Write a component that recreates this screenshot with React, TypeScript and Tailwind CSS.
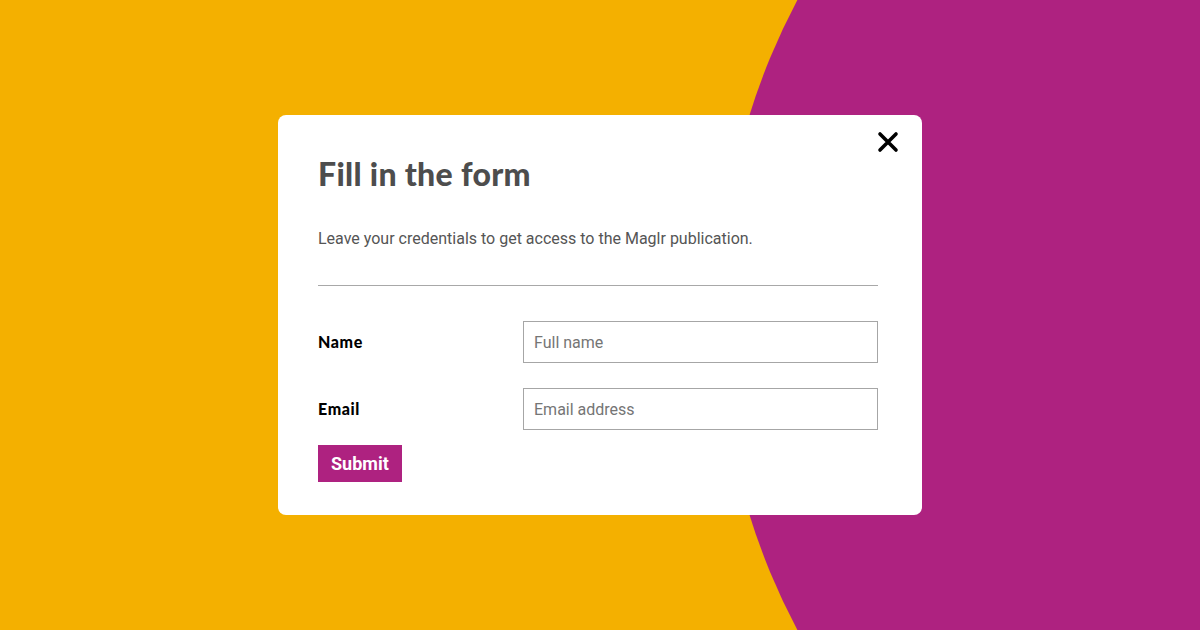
import React from 'react';

const CloseIcon: React.FC = () => (
  <svg width="22" height="22" viewBox="0 0 22 22" fill="none">
    <path d="M3 3L19 19M19 3L3 19" stroke="#000" strokeWidth="3.6" strokeLinecap="round" />
  </svg>
);

const FormRow: React.FC<{ label: string; placeholder: string; type?: string }> = ({ label, placeholder, type = 'text' }) => (
  <div className="grid grid-cols-[205px_1fr] items-center">
    <label className="font-['Lato',sans-serif] font-black text-[16px] tracking-[0.6px] text-black">{label}</label>
    <input
      type={type}
      placeholder={placeholder}
      className="h-[42px] w-full border border-[#a6a6a6] bg-white pl-[10px] font-['Roboto',sans-serif] text-[16px] text-[#333] placeholder:text-[#757575] outline-none"
    />
  </div>
);

export default function App() {
  return (
    <div className="relative flex h-[630px] w-[1200px] items-center justify-center overflow-hidden bg-[#f4b000]">
      {/* background shape */}
      <div className="absolute left-[719px] top-[-357px] h-[1344px] w-[1344px] rounded-full bg-[#ae2280]" />

      <div className="relative h-[400px] w-[644px] rounded-lg bg-white pl-10 pr-11 pt-[43px]">
        <button className="absolute right-[23px] top-[16px]" aria-label="Close">
          <CloseIcon />
        </button>

        <h1 className="font-['Lato',sans-serif] text-[32px] font-black leading-8 tracking-[0.3px] text-[#4d4d4d]">Fill in the form</h1>

        <p className="mt-[37px] font-['Roboto',sans-serif] text-[16px] leading-6 text-[#555]">
          Leave your credentials to get access to the Maglr publication.
        </p>

        <div className="mt-[34px] h-px bg-[#a8a8a8]" />

        <form className="mt-[35px] flex flex-col" onSubmit={(e) => e.preventDefault()}>
          <div className="flex flex-col gap-[25px]">
            <FormRow label="Name" placeholder="Full name" />
            <FormRow label="Email" placeholder="Email address" type="email" />
          </div>
          <div className="mt-[15px]">
            <button
              type="submit"
              className="h-[37px] bg-[#ae2280] px-[13px] font-['Roboto',sans-serif] text-[18px] font-bold text-white"
            >
              Submit
            </button>
          </div>
        </form>
      </div>
    </div>
  );
}
